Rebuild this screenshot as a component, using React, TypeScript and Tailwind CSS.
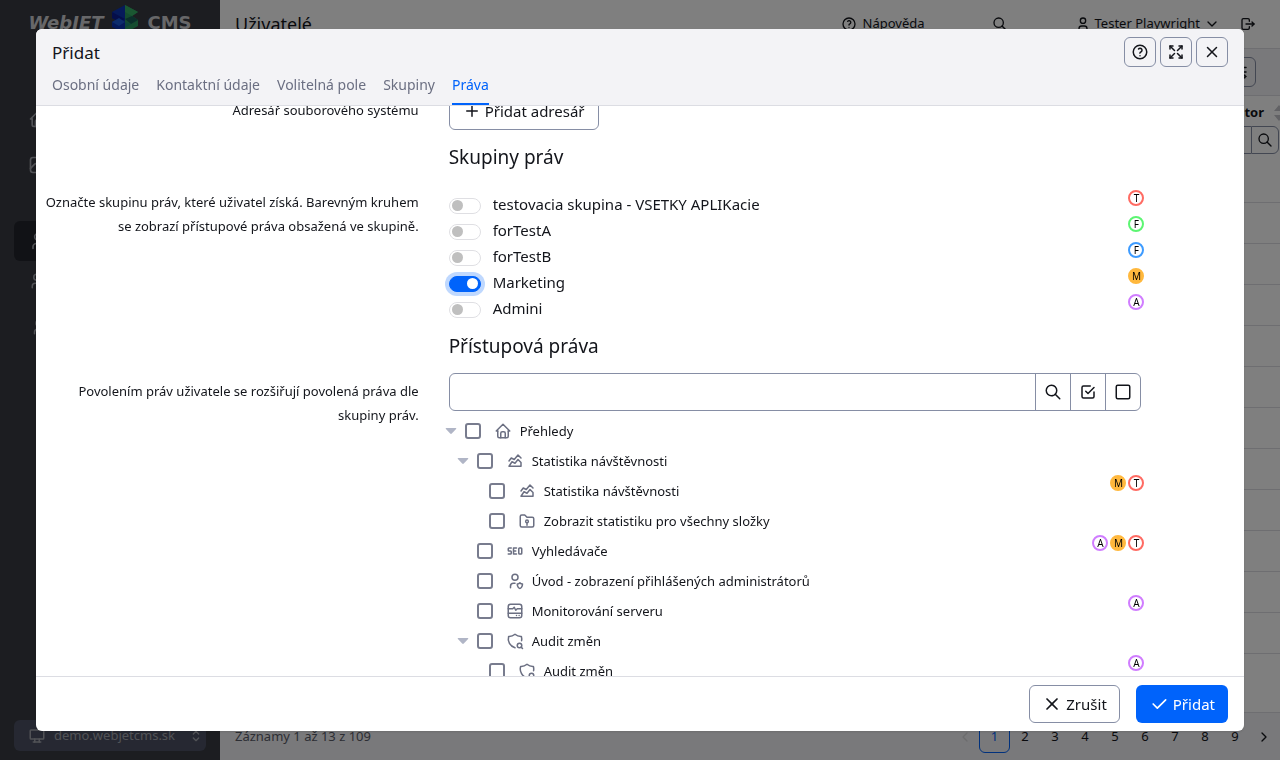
import {
  TbAdjustmentsHorizontal, TbArrowsMaximize, TbChartAreaLine, TbCheck, TbCheckbox, TbChevronDown,
  TbChevronLeft, TbChevronRight, TbDeviceDesktop, TbHelp, TbHome, TbLogout, TbPhoto, TbPlus, TbSearch,
  TbSelector, TbSeo, TbShieldSearch, TbSquare, TbUser, TbUsers, TbUserShield, TbX,
} from "react-icons/tb";

function FolderKeyIcon({ size = 18 }: { size?: number }) {
  return (
    <svg width={size} height={size} viewBox="0 0 24 24" fill="none" stroke="currentColor" strokeWidth="2" strokeLinecap="round" strokeLinejoin="round" aria-hidden="true">
      <path d="M5 4h4l3 3h7a2 2 0 0 1 2 2v9a2 2 0 0 1 -2 2h-14a2 2 0 0 1 -2 -2v-12a2 2 0 0 1 2 -2" />
      <circle cx="12" cy="12.5" r="1.8" />
      <path d="M12 14.5v3" />
    </svg>
  );
}

function ServerPulseIcon({ size = 18 }: { size?: number }) {
  return (
    <svg width={size} height={size} viewBox="0 0 24 24" fill="none" stroke="currentColor" strokeWidth="2" strokeLinecap="round" strokeLinejoin="round" aria-hidden="true">
      <rect x="3" y="3" width="18" height="18" rx="3" />
      <path d="M3 9h6l2 -2l2 4l2 -2h6M3 15h18M14 18h.01M17.5 18h.01" />
    </svg>
  );
}

function SortIcon() {
  return (
    <svg width="10" height="16" viewBox="0 0 10 16" fill="#c4c4ca" aria-hidden="true">
      <path d="M5 0l5 6h-10zM5 16l5-6h-10z" />
    </svg>
  );
}

function LogoCube() {
  return (
    <svg width="28" height="28" viewBox="0 0 28 28" aria-hidden="true">
      <path d="M14 0L1 7v6l4 2l-4 2v5l13 6z" fill="#0c35b4" />
      <path d="M1 7l13 7l-6 3l-7-4z" fill="#0a1c94" />
      <path d="M1 17l7-4l6 4l-6 4z" fill="#1a5ad8" />
      <path d="M14 0l13 7l-6 4l6 4v6l-13 7z" fill="#2a9a60" />
      <path d="M14 14l7-3l6 4l-7 4z" fill="#175e56" />
      <path d="M14 17l6 2l-6 4z" fill="#1c8a78" />
      <path d="M14 0l13 7l-6 4l-7-4z" fill="#36ae64" />
    </svg>
  );
}

type Letter = "T" | "F" | "G" | "M" | "A";

const badgeStyles: Record<Letter, string> = {
  T: "border-[#ff6b63]",
  F: "border-[#5cf572]",
  G: "border-[#3d9bff]",
  M: "border-[#ffb83d] bg-[#ffb83d]",
  A: "border-[#d07dff]",
};

function Badges({ items }: { items: Letter[] }) {
  return (
    <span className="-mt-px -mr-[3px] ml-auto flex gap-0.5 self-start">
      {items.map((l) => (
        <span key={l} className={"flex size-4 items-center justify-center rounded-full border-2 text-[10px] leading-none text-black " + badgeStyles[l]}>
          {l === "G" ? "F" : l}
        </span>
      ))}
    </span>
  );
}

const groups: { name: string; badge: Letter; on?: boolean }[] = [
  { name: "testovacia skupina - VSETKY APLIKacie", badge: "T" },
  { name: "forTestA", badge: "F" },
  { name: "forTestB", badge: "G" },
  { name: "Marketing", badge: "M", on: true },
  { name: "Admini", badge: "A" },
];

const indents = ["pl-0", "pl-3", "pl-6"];

const tree = [
  { level: 0, open: true, icon: TbHome, name: "Přehledy", badges: [] },
  { level: 1, open: true, icon: TbChartAreaLine, name: "Statistika návštěvnosti", badges: [] },
  { level: 2, open: false, icon: TbChartAreaLine, name: "Statistika návštěvnosti", badges: ["M", "T"] },
  { level: 2, open: false, icon: FolderKeyIcon, name: "Zobrazit statistiku pro všechny složky", badges: [] },
  { level: 1, open: false, icon: TbSeo, name: "Vyhledávače", badges: ["A", "M", "T"] },
  { level: 1, open: false, icon: TbUserShield, name: "Úvod - zobrazení přihlášených administrátorů", badges: [] },
  { level: 1, open: false, icon: ServerPulseIcon, name: "Monitorování serveru", badges: ["A"] },
  { level: 1, open: true, icon: TbShieldSearch, name: "Audit změn", badges: [] },
  { level: 2, open: false, icon: TbShieldSearch, name: "Audit změn", badges: ["A"] },
];

const tabs = ["Osobní údaje", "Kontaktní údaje", "Volitelná pole", "Skupiny", "Práva"];

const formRow = "grid grid-cols-[33fr_60fr_7fr]";
const labelCell = "pr-4 pl-1 text-right text-[13px] leading-6";
const fieldCell = "pr-[18px] pl-3.5";
const headButton = "flex h-[30px] w-8 items-center justify-center rounded-md border border-[#868ea5]";

function Background() {
  return (
    <div className="flex h-screen overflow-hidden bg-white">
      <aside className="flex w-[220px] shrink-0 flex-col bg-[#383a42] text-[#a3a5ad]">
        <div className="flex h-11 items-center justify-center gap-2 pt-0.5 font-['DejaVu_Sans',sans-serif] text-lg font-bold text-[#cfcfd2]">
          <span className="italic">WebJET</span>
          <span className="-mt-2"><LogoCube /></span>
          <span>CMS</span>
        </div>
        <nav className="flex flex-col px-3.5 pt-[55px]" aria-label="Menu">
          <a href="#prehled" aria-label="Přehled" className="flex h-10 items-center pl-3.5"><TbHome size={20} /></a>
          <a href="#sablony" aria-label="Šablony" className="mt-1.5 flex h-10 items-center pl-3.5"><TbPhoto size={20} /></a>
          <a href="#uzivatele" aria-label="Uživatelé" className="mt-9 flex h-10 items-center rounded-md bg-[#23252c] pl-3.5"><TbUser size={20} /></a>
          <a href="#skupiny" aria-label="Skupiny uživatelů" className="flex h-10 items-center pl-4"><TbUsers size={18} /></a>
          <a href="#prava" aria-label="Skupiny práv" className="mt-1.5 flex h-10 items-center pl-4"><TbUser size={18} /></a>
        </nav>
        <button type="button" className="mx-3.5 mt-auto mb-[9px] flex h-[31px] items-center gap-2 rounded-md bg-[#4c5164] px-3.5 text-[13px]">
          <TbDeviceDesktop size={18} />
          demo.webjetcms.sk
          <TbSelector size={16} className="-mr-3 ml-auto" />
        </button>
      </aside>
      <main className="flex min-w-0 flex-1 flex-col text-[#13151b]">
        <header className="flex h-12 shrink-0 items-center pr-6 pl-[15px] text-[13px]">
          <h1 className="text-lg">Uživatelé</h1>
          <a href="#napoveda" className="ml-auto flex items-center gap-1.5"><TbHelp size={16} />Nápověda</a>
          <button type="button" aria-label="Hledat" className="ml-[67px]"><TbSearch size={16} /></button>
          <button type="button" className="ml-[67px] flex items-center gap-1"><TbUser size={16} />Tester Playwright<TbChevronDown size={16} /></button>
          <a href="#odhlasit" aria-label="Odhlásit" className="ml-5"><TbLogout size={16} /></a>
        </header>
        <div className="flex h-12 shrink-0 items-center justify-end border-y border-[#dcdce2] bg-[#f3f3f6] pr-6">
          <button type="button" aria-label="Nastavení" className={headButton}><TbAdjustmentsHorizontal size={18} /></button>
        </div>
        <table className="w-full text-[13px]">
          <thead>
            <tr>
              <th className="h-[30px] p-0 pt-1 font-bold">
                <span className="-mr-1 flex items-center justify-end gap-2.5">Administrátor<SortIcon /></span>
              </th>
            </tr>
            <tr>
              <td className="h-[76px] p-0 align-top">
                <div className="flex justify-end">
                  <input aria-label="Filtr" className="h-7 w-24 rounded-l-md border border-r-0 border-[#868ea5]" />
                  <button type="button" aria-label="Hledat" className="mr-px flex size-7 items-center justify-center rounded-r-md border border-[#868ea5]"><TbSearch size={16} /></button>
                </div>
              </td>
            </tr>
          </thead>
          <tbody>
            {Array.from({ length: 12 }, (_, i) => (
              <tr key={i} className="h-[41px] border-t border-[#dcdce2]"><td /></tr>
            ))}
          </tbody>
        </table>
        <footer className="mt-auto flex h-12 shrink-0 items-center border-t border-[#dcdce2] bg-[#f3f3f6] pr-2 pl-[15px] text-[13px]">
          <span className="text-[#5a5c69]">Záznamy 1 až 13 z 109</span>
          <nav className="ml-auto flex items-center" aria-label="Stránkování">
            <TbChevronLeft size={16} className="mr-1.5 text-[#d8d8dc]" />
            {[1, 2, 3, 4, 5, 6, 7, 8, 9].map((n) => (
              <a key={n} href={"#" + n} className={n === 1 ? "flex h-8 w-[31px] items-center justify-center rounded-md border border-[#0063fb] text-[#0063fb]" : "flex h-8 w-[30px] items-center justify-center"}>{n}</a>
            ))}
            <TbChevronRight size={16} className="ml-1.5" />
          </nav>
        </footer>
      </main>
    </div>
  );
}

export default function App() {
  return (
    <div className="font-['Noto_Sans',sans-serif]">
      <Background />
      <div className="fixed inset-0 flex bg-black/50 px-9 py-[29px]">
        <div role="dialog" aria-labelledby="dialog-title" className="flex min-w-0 flex-1 flex-col overflow-hidden rounded-md bg-white text-[#13151b] shadow">
          <header className="shrink-0 border-b border-[#dcdde3] bg-[#f3f3f6] px-4 pt-2">
            <div className="flex h-[30px] items-center gap-1">
              <h2 id="dialog-title" className="mr-auto pt-0.5 text-[17px]">Přidat</h2>
              <button type="button" aria-label="Nápověda" className={headButton}><TbHelp size={18} /></button>
              <button type="button" aria-label="Celá obrazovka" className={headButton}><TbArrowsMaximize size={18} /></button>
              <button type="button" aria-label="Zavřít" className={headButton}><TbX size={18} /></button>
            </div>
            <div role="tablist" className="flex h-[38px] gap-[17px] text-sm text-[#6b6f82]">
              {tabs.map((t) => (
                <button key={t} type="button" role="tab" aria-selected={t === "Práva"} className={t === "Práva" ? "border-b-2 border-[#0063fb] text-[#0063fb]" : "border-b-2 border-transparent"}>{t}</button>
              ))}
            </div>
          </header>

          <div className="min-h-0 flex-1 overflow-hidden">
            <div className="-mt-3.5">
              <div className={formRow}>
                <div className={labelCell + " pt-1.5"}>Adresář souborového systému</div>
                <div className={fieldCell}>
                  <button type="button" className="flex h-[38px] items-center gap-1 rounded-md border border-[#868ea5] px-[13px] text-[15px]"><TbPlus size={18} />Přidat adresář</button>
                </div>
              </div>
              <div className={formRow}>
                <h3 className="col-start-2 pt-3 pb-5 pl-3.5 text-[19px] leading-[30px]">Skupiny práv</h3>
              </div>
              <div className={formRow}>
                <p className={labelCell + " -mt-0.5"}>Označte skupinu práv, které uživatel získá. Barevným kruhem se zobrazí přístupové práva obsažená ve skupině.</p>
                <ul className={fieldCell + " -mt-px"}>
                  {groups.map((g) => (
                    <li key={g.name} className="flex h-[26px] items-center text-[15px]">
                      <label className="flex items-center gap-3">
                        <span className="flex pt-[3px]">
                          <input type="checkbox" role="switch" defaultChecked={g.on} className="peer sr-only" />
                          <span className="flex h-4 w-8 items-center rounded-full border border-[#dfdfe3] px-0.5 text-[#bfbfbf] peer-checked:justify-end peer-checked:border-[#0063fb] peer-checked:bg-[#0063fb] peer-checked:text-white peer-checked:ring-4 peer-checked:ring-[#bfd8fe]">
                            <span className="size-[11px] rounded-full bg-current" />
                          </span>
                        </span>
                        {g.name}
                      </label>
                      <Badges items={[g.badge]} />
                    </li>
                  ))}
                </ul>
              </div>
              <div className={formRow}>
                <h3 className="col-start-2 pt-2.5 pb-3 pl-3.5 text-[19px] leading-[30px]">Přístupová práva</h3>
              </div>
              <div className={formRow}>
                <p className={labelCell + " pt-1.5 pl-8"}>Povolením práv uživatele se rozšiřují povolená práva dle skupiny práv.</p>
                <div className={fieldCell}>
                  <div className="flex h-[38px] divide-x divide-[#868ea5] overflow-hidden rounded-md border border-[#868ea5]">
                    <input aria-label="Hledat právo" className="min-w-0 flex-1 px-3 outline-none" />
                    <button type="button" aria-label="Hledat" className="flex w-[35px] items-center justify-center"><TbSearch size={18} /></button>
                    <button type="button" aria-label="Označit vše" className="flex w-[35px] items-center justify-center"><TbCheckbox size={18} /></button>
                    <button type="button" aria-label="Odznačit vše" className="flex w-[34px] items-center justify-center"><TbSquare size={18} /></button>
                  </div>
                  <ul className="pt-[5px] text-[13px]">
                    {tree.map((n, i) => {
                      const Icon = n.icon;
                      return (
                        <li key={i} className={"flex h-[30px] items-center " + indents[n.level]}>
                          <span className="-ml-1.5 flex w-[22px] text-[#b0b5c6]">
                            {n.open && (
                              <svg width="16" height="16" viewBox="0 0 16 16" fill="currentColor" aria-hidden="true"><path d="M3.300 5h9.400q1.200 0 .4 1l-4.300 4.500q-.8.800-1.600 0l-4.300-4.500q-.8-1 .4-1z" /></svg>
                            )}
                          </span>
                          <label className="flex items-center">
                            <input type="checkbox" className="size-4 appearance-none rounded-[3px] border-2 border-[#787c8e]" />
                            <span className="mr-2 ml-[13px] text-[#6b6f82]"><Icon size={18} /></span>
                            <span className="pt-px">{n.name}</span>
                          </label>
                          <Badges items={n.badges as Letter[]} />
                        </li>
                      );
                    })}
                  </ul>
                </div>
              </div>
            </div>
          </div>

          <footer className="flex shrink-0 justify-end gap-4 border-t border-[#dcdde3] px-4 py-2 text-[15px]">
            <button type="button" className="flex h-[38px] items-center gap-1 rounded-md border border-[#868ea5] px-3"><TbX size={20} />Zrušit</button>
            <button type="button" className="flex h-[38px] items-center gap-1 rounded-md bg-[#0063fb] px-[13px] text-white"><TbCheck size={20} />Přidat</button>
          </footer>
        </div>
      </div>
    </div>
  );
}
